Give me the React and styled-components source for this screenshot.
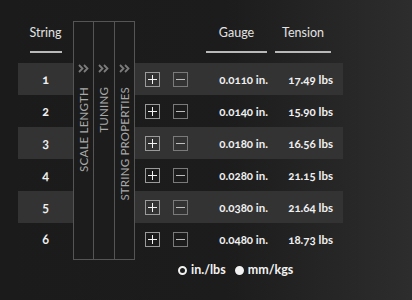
import React from 'react';
import styled, { createGlobalStyle } from 'styled-components';

const strings = [
  { n: 1, gauge: '0.0110 in.', tension: '17.49 lbs' },
  { n: 2, gauge: '0.0140 in.', tension: '15.90 lbs' },
  { n: 3, gauge: '0.0180 in.', tension: '16.56 lbs' },
  { n: 4, gauge: '0.0280 in.', tension: '21.15 lbs' },
  { n: 5, gauge: '0.0380 in.', tension: '21.64 lbs' },
  { n: 6, gauge: '0.0480 in.', tension: '18.73 lbs' },
];

const panels = ['Scale Length', 'Tuning', 'String Properties'];

const Chevrons = () => (
  <svg width="11" height="9" viewBox="0 0 11 9" fill="none">
    <path d="M1 1l3.5 3.5L1 8M6 1l3.5 3.5L6 8" stroke="#7c7c7c" strokeWidth="1.8" />
  </svg>
);

const App = () => {
  return (
    <>
      <GlobalStyle />
      <Page>
        <Table>
          <HeadCell $col={1} $pl={0} $pr={0} $lineWidth={32}>
            <span>String</span>
            <Line />
          </HeadCell>
          <HeadCell $col={7} $pl={18} $pr={3}>
            <span>Gauge</span>
            <Line />
          </HeadCell>
          <HeadCell $col={8} $pl={5} $pr={4}>
            <span>Tension</span>
            <Line />
          </HeadCell>

          {strings.map((s, i) => (
            <React.Fragment key={s.n}>
              <Stripe $row={i + 2} $odd={i % 2 === 0} />
              <Num $row={i + 2}>{s.n}</Num>
              <SquareButton $row={i + 2} $col={4} $light>
                <Plus />
              </SquareButton>
              <SquareButton $row={i + 2} $col={6}>
                <Minus />
              </SquareButton>
              <Value $row={i + 2} $col={7}>{s.gauge}</Value>
              <Value $row={i + 2} $col={8}>{s.tension}</Value>
            </React.Fragment>
          ))}

          <PanelGroup>
            {panels.map((p) => (
              <Panel key={p}>
                <Chevrons />
                <PanelLabel>{p}</PanelLabel>
              </Panel>
            ))}
          </PanelGroup>
        </Table>

        <Units>
          <UnitOption>
            <Dot />
            in./lbs
          </UnitOption>
          <UnitOption>
            <Dot $filled />
            mm/kgs
          </UnitOption>
        </Units>
      </Page>
    </>
  );
};

export default App;

const GlobalStyle = createGlobalStyle`
  html, body {
    margin: 0;
    padding: 0;
  }
  body {
    width: 412px;
    height: 300px;
    overflow: hidden;
    background: linear-gradient(90deg, #1b1b1b 0%, #1c1c1c 55%, #2d2d2d 100%);
    font-family: Lato, "Open Sans", sans-serif;
    font-variant-numeric: oldstyle-nums;
  }
`;

const Page = styled.div`
  padding: 21px 0 0 18px;
`;

const Table = styled.div`
  display: grid;
  width: 325px;
  grid-template-columns: 55px 62px 10px 15px 13px 15px 82px 65px 8px;
  grid-template-rows: 42px repeat(6, 32px) 5px;
`;

const HeadCell = styled.div`
  grid-column: ${(p) => p.$col};
  grid-row: 1;
  display: flex;
  flex-direction: column;
  align-items: center;
  padding: 4px ${(p) => p.$pr}px 0 ${(p) => p.$pl}px;
  color: #e2e2e2;
  font-size: 12.5px;
  line-height: 16px;

  & > div {
    width: ${(p) => (p.$lineWidth ? `${p.$lineWidth}px` : '100%')};
  }
`;

const Line = styled.div`
  height: 2px;
  margin-top: 10px;
  background: #b9b9b9;
`;

const Stripe = styled.div`
  grid-column: 1 / -1;
  grid-row: ${(p) => p.$row};
  background: ${(p) => (p.$odd ? '#333333' : 'transparent')};
`;

const Num = styled.div`
  grid-column: 1;
  grid-row: ${(p) => p.$row};
  display: flex;
  align-items: center;
  justify-content: center;
  color: #f0f0f0;
  font-size: 12.5px;
  font-weight: 700;
`;

const SquareButton = styled.div`
  grid-column: ${(p) => p.$col};
  grid-row: ${(p) => p.$row};
  align-self: center;
  position: relative;
  width: 15px;
  height: 15px;
  box-sizing: border-box;
  border: 1px solid ${(p) => (p.$light ? '#9a9a9a' : '#7a7a7a')};
  display: flex;
  align-items: center;
  justify-content: center;
`;

const Plus = styled.span`
  position: relative;
  width: 9px;
  height: 9px;

  &::before,
  &::after {
    content: '';
    position: absolute;
    background: #f2f2f2;
  }
  &::before {
    left: 0;
    top: 4px;
    width: 9px;
    height: 1px;
  }
  &::after {
    left: 4px;
    top: 0;
    width: 1px;
    height: 9px;
  }
`;

const Minus = styled.span`
  width: 9px;
  height: 1px;
  background: #bdbdbd;
`;

const Value = styled.div`
  grid-column: ${(p) => p.$col};
  grid-row: ${(p) => p.$row};
  display: flex;
  align-items: center;
  justify-content: flex-end;
  padding-right: 2px;
  color: #f0f0f0;
  font-size: 11.5px;
  font-weight: 700;
  white-space: nowrap;
`;

const PanelGroup = styled.div`
  grid-column: 2;
  grid-row: 1 / -1;
  z-index: 1;
  display: flex;
  border: 1px solid #555555;
  background: #1c1c1c;
`;

const Panel = styled.div`
  flex: 1;
  display: flex;
  flex-direction: column;
  align-items: center;
  padding-top: 42px;
  gap: 14px;

  & + & {
    border-left: 1px solid #555555;
  }
`;

const PanelLabel = styled.span`
  writing-mode: vertical-rl;
  transform: rotate(180deg);
  color: #a9a9a9;
  font-size: 11.5px;
  letter-spacing: 0.2px;
  text-transform: uppercase;
  white-space: nowrap;
  line-height: 1;
`;

const Units = styled.div`
  display: flex;
  gap: 9px;
  padding: 3px 0 0 160px;
`;

const UnitOption = styled.div`
  display: flex;
  align-items: center;
  gap: 4px;
  color: #f2f2f2;
  font-size: 12.5px;
  font-weight: 700;
  line-height: 14px;
`;

const Dot = styled.span`
  width: 9px;
  height: 9px;
  box-sizing: border-box;
  border-radius: 50%;
  border: 2px solid #f2f2f2;
  background: ${(p) => (p.$filled ? '#f2f2f2' : 'transparent')};
`;
